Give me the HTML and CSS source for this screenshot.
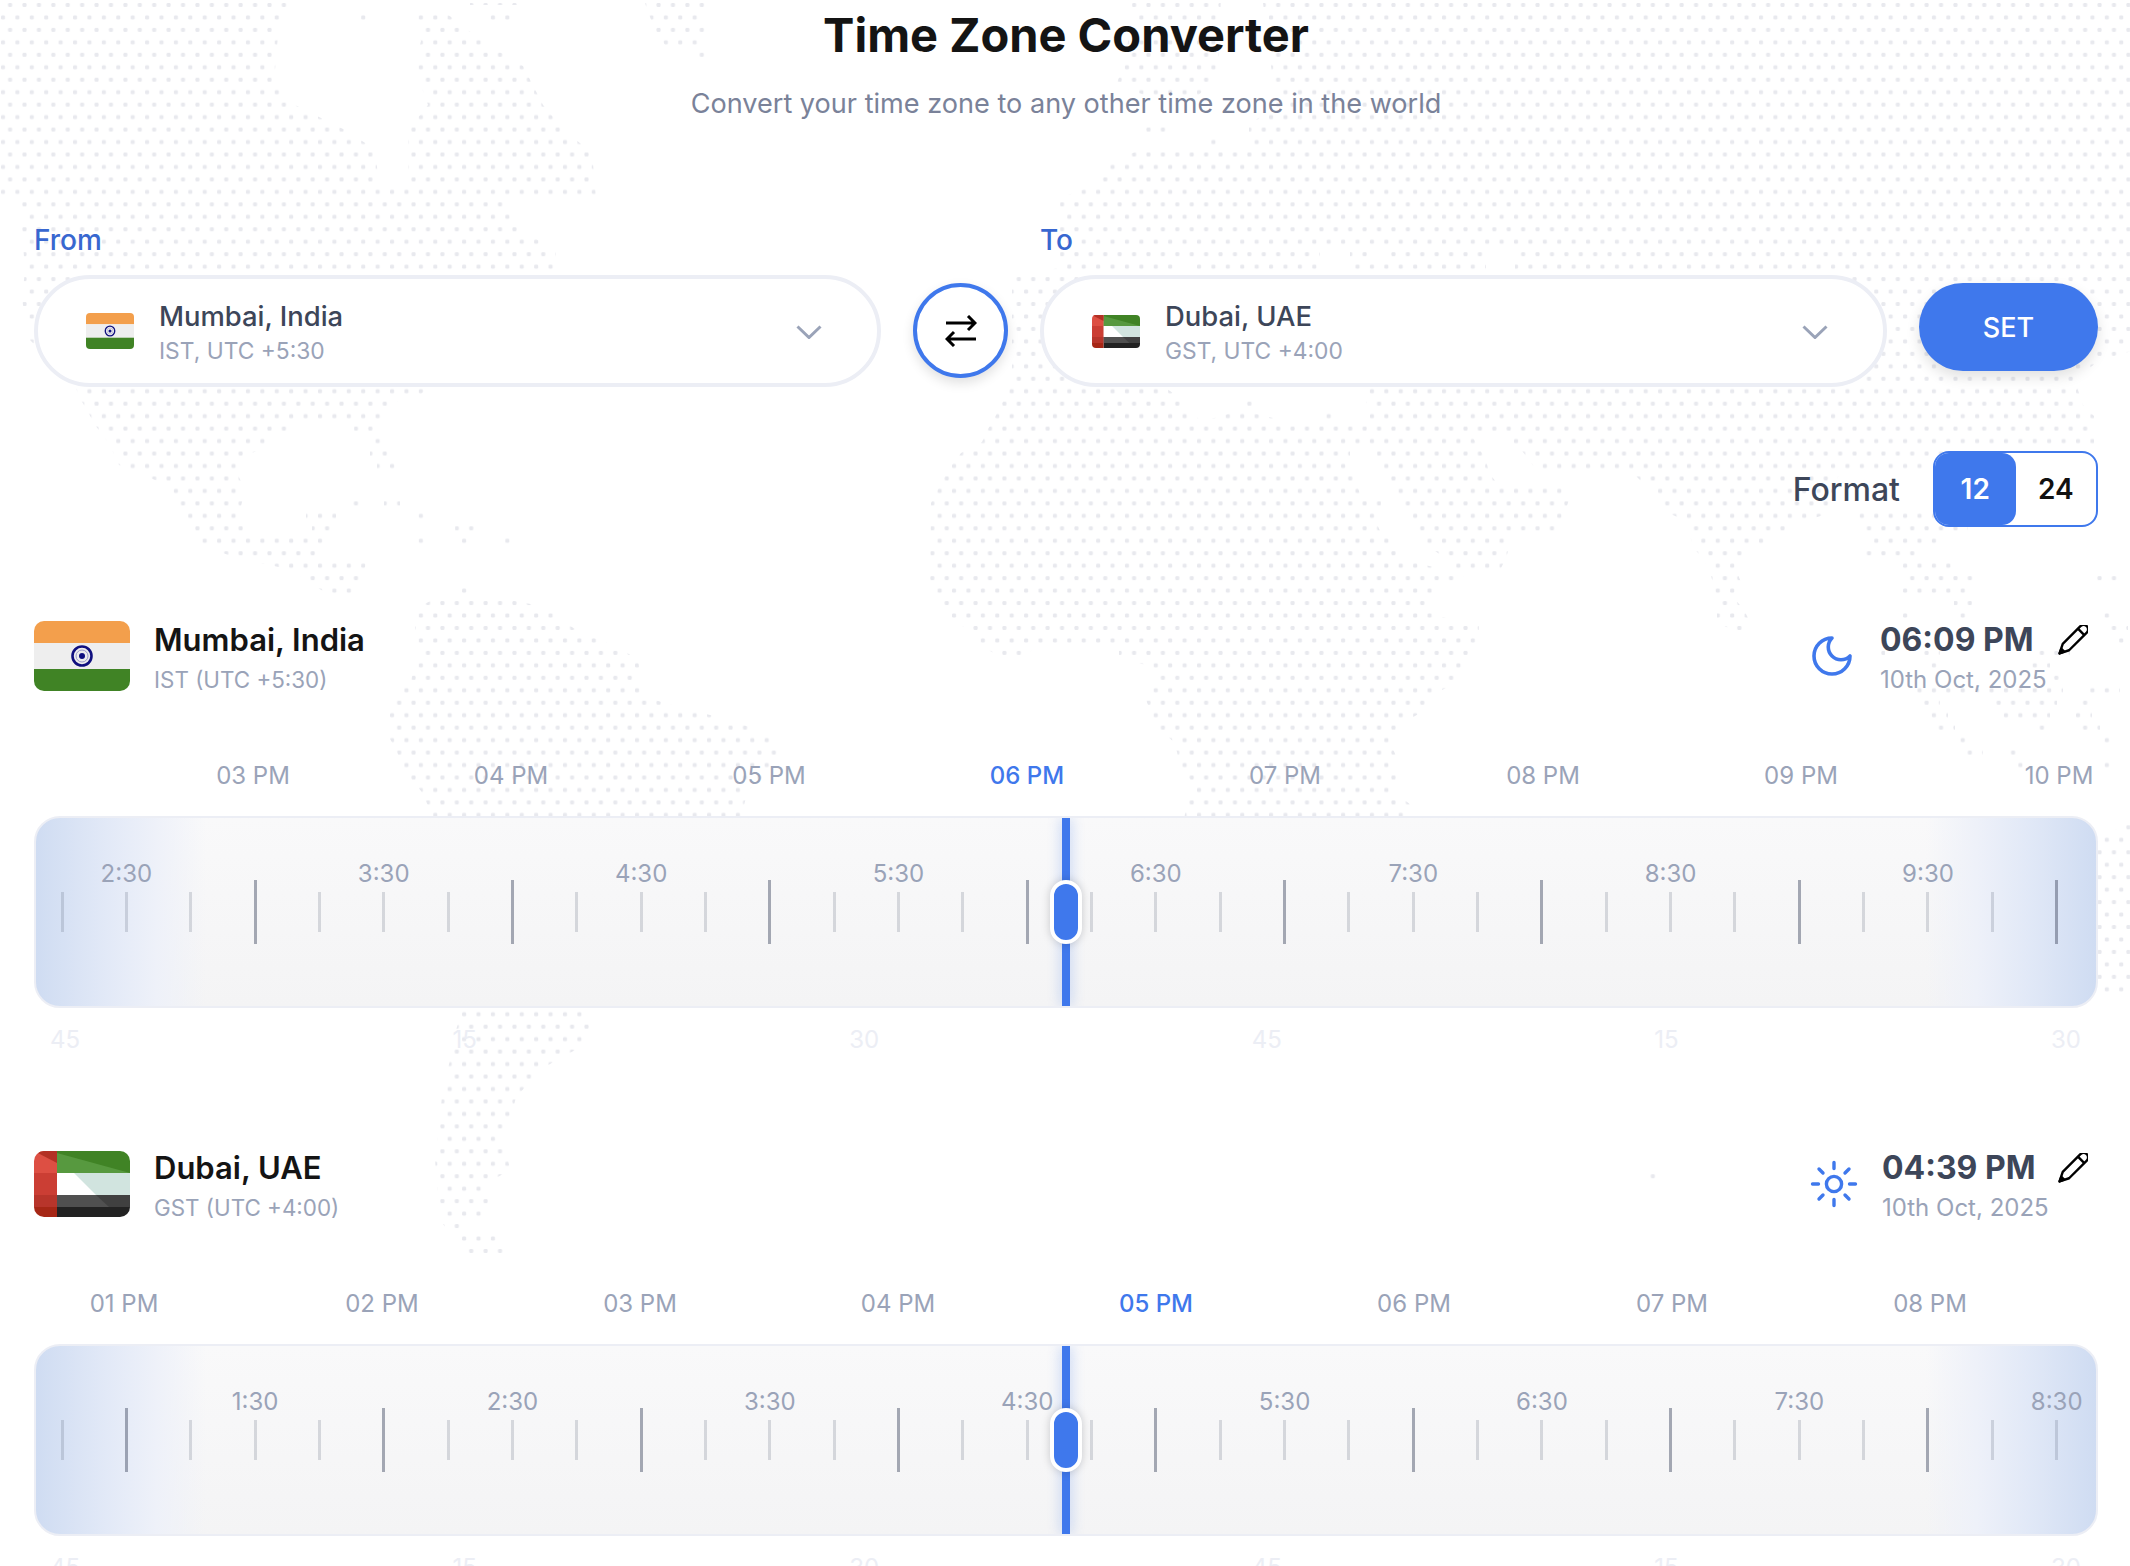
FILE: index.html
```html
<!DOCTYPE html>
<html lang="en">
<head>
<meta charset="utf-8">
<title>Time Zone Converter</title>
<link rel="stylesheet" href="styles.css">
</head>
<body>
<svg width="0" height="0" class="defs">
  <symbol id="flag-in" viewBox="0 0 96 70" preserveAspectRatio="none">
    <rect width="96" height="22" fill="#f39f4c"/>
    <rect y="22" width="96" height="26" fill="#eeeeee"/>
    <rect y="48" width="96" height="22" fill="#408325"/>
    <circle cx="48" cy="35" r="9.5" fill="none" stroke="#10107f" stroke-width="2.6"/>
    <circle cx="48" cy="35" r="3" fill="#10107f"/>
    <circle cx="48" cy="35" r="6" fill="none" stroke="#9a9ac8" stroke-width="1"/>
  </symbol>
  <symbol id="flag-ae" viewBox="0 0 96 66" preserveAspectRatio="none">
    <rect x="23" width="73" height="22" fill="#408325"/>
    <path d="M23 2L96 22H23Z" fill="#57993f"/>
    <rect x="23" y="22" width="73" height="22" fill="#d1e4df"/>
    <path d="M23 22H40L62 44H23Z" fill="#fff"/>
    <rect x="23" y="44" width="73" height="12" fill="#404040"/>
    <path d="M23 44H62L75 56H23Z" fill="#505050"/>
    <rect x="23" y="56" width="73" height="10" fill="#222"/>
    <rect width="23" height="22" fill="#dd4f43"/>
    <path d="M0 0H23V12Z" fill="#b33024"/>
    <rect y="22" width="23" height="22" fill="#cb3e34"/>
    <rect y="44" width="23" height="12" fill="#b8352b"/>
    <rect y="56" width="23" height="10" fill="#a62716"/>
  </symbol>
  <symbol id="chev" viewBox="0 0 26 14"><path d="M1.5 1.5L13 12.5L24.5 1.5" fill="none" stroke="#9aa3b8" stroke-width="3"/></symbol>
  <symbol id="pencil" viewBox="0 0 30 30">
    <g transform="translate(15 15) rotate(45)" fill="none" stroke="#000" stroke-width="2.4" stroke-linejoin="round">
      <path d="M-4.5 -15a4.5 4.5 0 0 1 9 0V10L0 19L-4.5 10Z" fill="#fff"/>
      <path d="M-4.5 -11.5H4.5"/>
      <path d="M-2 14.5L0 19L2 14.5Z" fill="#000"/>
    </g>
  </symbol>
</svg>

<div class="page">
  <svg class="map" width="2130" height="1566" viewBox="0 0 2130 1566" aria-hidden="true">
    <defs>
      <pattern id="dots" patternUnits="userSpaceOnUse" width="14.41" height="24.92">
        <rect x="8.1" y="3" width="4" height="4" rx="1.2" fill="#e8e9ee"/>
        <rect x="1" y="15.46" width="4" height="4" rx="1.2" fill="#e8e9ee"/>
      </pattern>
    </defs>
    <path fill="url(#dots)" fill-rule="evenodd" d="
      M0 -5H305L280 12L275 70L285 100L305 110L345 130L376 150L378 183H408V130L428 105L414 66L421 41L411 10H442L482 41L523 66L543 105L564 130L592 153L596 197H505L520 230L556 250V272L420 395H408L387 408L380 422H300L265 445L245 458L238 475L245 490L240 510L245 535H323V547L316 560H367L360 585L354 597H333L313 585L292 570L238 558L204 547L184 520L173 495L160 482L119 465L112 450L105 438L95 425L88 412L81 400L75 386L30 340L22 300L25 270L20 205L0 197Z
      M354 423h20v12h-20z M372 436h12v12h-12z M370 448h18v12h-18z M377 461h18v12h-18z M352 499h10v12h-10z M384 499h16v12h-16z M306 510h30v12h-30z M416 510h10v12h-10z M312 522h21v12h-21z M455 522h20v12h-20z M416 535h10v12h-10z M460 535h10v12h-10z M500 535h10v12h-10z M460 586h10v12h-10z
      M360 10h10v12h-10z M470 -5h48v10h-48z M490 10h20v12h-20z
      M642 -5H707L703 20L707 32L700 45H665L655 30L650 17Z M698 48h10v12h-10z
      M1133 -5H1221L1218 70L1210 85L1195 98H1153L1116 85L1126 60Z
      M1146 124h21v12h-21z M1208 137h10v12h-10z
      M441 596H489L557 609L563 622L584 634L618 647L638 660L642 685L648 698L682 708L734 721L767 734L780 746L776 770L748 790L740 820H435L421 791L404 770L397 752L388 735L390 700L411 680L417 660L414 609Z
      M463 1009H585L594 1027L585 1045L560 1058L540 1070L530 1082L516 1097L510 1121L503 1135L510 1170L489 1182V1222H462V1234H496V1246L520 1258H470L455 1240L440 1220L435 1160L440 1120L442 1095L450 1060L456 1030Z
      M1262 -5H2135V350L2100 360L2080 375L2078 390L2083 405L2094 416V445L2083 460L1927 462V475H1839L1832 490L1839 510L1805 521L1778 534L1757 547L1737 559V572L1742 585L1734 598L1744 610L1750 622L1744 634H1740L1717 622V598L1710 572L1703 559L1693 547L1686 521L1662 510L1657 497L1635 475H1540L1520 448L1500 436H1472L1486 460L1489 473L1500 487H1562L1569 500L1562 520L1554 535H1513L1506 558L1499 572H1452L1445 558L1428 546L1418 533L1411 520L1404 510L1398 497L1391 485L1384 472L1377 458V450H1350V470L1357 485L1361 497H1381V510L1375 520L1381 533L1398 546L1404 558L1425 565L1466 575L1432 590V615L1479 625V645L1466 660L1459 672L1452 685L1432 695L1425 710L1405 722L1398 735L1391 745L1398 760V795L1411 805L1404 820H1184L1187 802L1194 785L1180 765L1177 752L1174 742L1160 730L1153 717L1146 700L1153 680L1150 666L1119 658V645H1039L1022 658H1001L981 645L971 632L951 618L944 605L937 595L930 580L931 503L937 491L944 478L951 466L961 453L982 442L988 429L995 417L1002 403L1009 391L1012 380V275L1060 268V198L1095 185L1099 172L1113 160L1146 148H1249V125L1276 105Z
      M1160 384H1370L1364 397L1370 410V422H1289L1241 410L1201 422L1180 398Z
      M1242 398h12v12h-12z M1324 410h12v12h-12z
      M1320 247h30v24h-30z M1367 247h24v12h-24z M1486 247h29v24h-29z M1174 259h23v12h-23z
      M1859 509h81v12h-81z M1866 522h102v12h-102z M1866 535h74v12h-74z M1866 547h49v12h-49z M1903 560h51v12h-51z M1903 573h77v12h-77z M1903 586h72v12h-72z M1954 598h18v12h-18z
      M2097 573h27v12h-27z M1898 611h10v12h-10z M1956 611h10v12h-10z M2100 611h10v12h-10z M2108 623h20v12h-20z M2115 636h10v12h-10z
      M1875 648h10v12h-10z M1922 648h18v12h-18z M2037 648h33v12h-33z M1928 661h10v12h-10z M2030 661h20v12h-20z M2050 673h10v12h-10z
      M1912 686h151v12h-151z M2087 686h33v12h-33z M1922 698h18v12h-18z M1992 698h65v12h-65z M2080 698h10v12h-10z M1928 711h20v12h-20z M2000 711h50v12h-50z M2072 711h20v12h-20z M1935 723h20v12h-20z M2037 723h10v12h-10z M2080 723h20v12h-20z M1957 736h10v12h-10z M2100 736h10v12h-10z M1965 748h18v12h-18z M2007 748h10v12h-10z M2015 760h10v12h-10z M2100 760h10v12h-10z
      M2127 822H2135V995H2100L2098 990V840L2115 830Z M1647 1171h10v12h-10z"/>
  </svg>

  <header class="head">
    <h1 class="title">Time Zone Converter</h1>
    <p class="subtitle">Convert your time zone to any other time zone in the world</p>
  </header>

  <section class="controls">
    <div class="field">
      <label class="field-label">From</label>
      <div class="select">
        <svg class="flag-sm flag-sm-in"><use href="#flag-in"/></svg>
        <div class="select-text"><div class="select-name">Mumbai, India</div><div class="select-sub">IST, UTC +5:30</div></div>
        <svg class="chev"><use href="#chev"/></svg>
      </div>
    </div>
    <button class="swap" aria-label="Swap">
      <svg width="32" height="32" viewBox="0 0 32 32" fill="none" stroke="#000" stroke-width="3"><path d="M1 8H30M23 1L30 8L23 15"/><path d="M31 24H2M9 17L2 24L9 31"/></svg>
    </button>
    <div class="field">
      <label class="field-label">To</label>
      <div class="select">
        <svg class="flag-sm flag-sm-ae"><use href="#flag-ae"/></svg>
        <div class="select-text"><div class="select-name">Dubai, UAE</div><div class="select-sub">GST, UTC +4:00</div></div>
        <svg class="chev"><use href="#chev"/></svg>
      </div>
    </div>
    <button class="set">SET</button>
  </section>

  <section class="format">
    <span class="format-label">Format</span>
    <div class="toggle"><span class="seg seg-on">12</span><span class="seg">24</span></div>
  </section>

  <section class="zone">
    <div class="zone-head">
      <svg class="flag flag-in"><use href="#flag-in"/></svg>
      <div class="zone-info"><div class="zone-name">Mumbai, India</div><div class="zone-sub">IST (UTC +5:30)</div></div>
      <svg class="phase" width="48" height="48" viewBox="0 0 24 24" fill="none" stroke="#3f78ec" stroke-width="1.8" stroke-linejoin="round"><path d="M12 3a6 6 0 0 0 9 9 9 9 0 1 1-9-9Z"/></svg>
      <div class="zone-time"><div class="time">06:09 PM</div><div class="date">10th Oct, 2025</div></div>
      <svg class="pencil"><use href="#pencil"/></svg>
    </div>
    <div class="hours hours-a">
      <span>03 PM</span><span>04 PM</span><span>05 PM</span><span class="now">06 PM</span><span>07 PM</span><span>08 PM</span><span>09 PM</span><span>10 PM</span>
    </div>
    <div class="track">
      <span class="tick"></span><span class="tick"><em>2:30</em></span><span class="tick"></span><span class="tick major"></span>
      <span class="tick"></span><span class="tick"><em>3:30</em></span><span class="tick"></span><span class="tick major"></span>
      <span class="tick"></span><span class="tick"><em>4:30</em></span><span class="tick"></span><span class="tick major"></span>
      <span class="tick"></span><span class="tick"><em>5:30</em></span><span class="tick"></span><span class="tick major"></span>
      <span class="tick"></span><span class="tick"><em>6:30</em></span><span class="tick"></span><span class="tick major"></span>
      <span class="tick"></span><span class="tick"><em>7:30</em></span><span class="tick"></span><span class="tick major"></span>
      <span class="tick"></span><span class="tick"><em>8:30</em></span><span class="tick"></span><span class="tick major"></span>
      <span class="tick"></span><span class="tick"><em>9:30</em></span><span class="tick"></span><span class="tick major"></span>
      <div class="head-line"></div><div class="handle"></div>
    </div>
    <div class="minutes"><span>45</span><span>15</span><span>30</span><span>45</span><span>15</span><span>30</span></div>
  </section>

  <section class="zone">
    <div class="zone-head">
      <svg class="flag flag-ae"><use href="#flag-ae"/></svg>
      <div class="zone-info"><div class="zone-name">Dubai, UAE</div><div class="zone-sub">GST (UTC +4:00)</div></div>
      <svg class="phase" width="48" height="48" viewBox="0 0 48 48" fill="none" stroke="#3f78ec" stroke-width="3.4" stroke-linecap="round"><circle cx="24" cy="24" r="7.6"/><path d="M24 2.5V8.5M24 39.5V45.5M2.5 24H8.5M39.5 24H45.5M9 9L13 13M35 35L39 39M9 39L13 35M35 13L39 9"/></svg>
      <div class="zone-time zone-time-b"><div class="time">04:39 PM</div><div class="date">10th Oct, 2025</div></div>
      <svg class="pencil"><use href="#pencil"/></svg>
    </div>
    <div class="hours hours-b">
      <span>01 PM</span><span>02 PM</span><span>03 PM</span><span>04 PM</span><span class="now">05 PM</span><span>06 PM</span><span>07 PM</span><span>08 PM</span>
    </div>
    <div class="track">
      <span class="tick"></span><span class="tick major"></span><span class="tick"></span><span class="tick"><em>1:30</em></span>
      <span class="tick"></span><span class="tick major"></span><span class="tick"></span><span class="tick"><em>2:30</em></span>
      <span class="tick"></span><span class="tick major"></span><span class="tick"></span><span class="tick"><em>3:30</em></span>
      <span class="tick"></span><span class="tick major"></span><span class="tick"></span><span class="tick"><em>4:30</em></span>
      <span class="tick"></span><span class="tick major"></span><span class="tick"></span><span class="tick"><em>5:30</em></span>
      <span class="tick"></span><span class="tick major"></span><span class="tick"></span><span class="tick"><em>6:30</em></span>
      <span class="tick"></span><span class="tick major"></span><span class="tick"></span><span class="tick"><em>7:30</em></span>
      <span class="tick"></span><span class="tick major"></span><span class="tick"></span><span class="tick"><em>8:30</em></span>
      <div class="head-line"></div><div class="handle"></div>
    </div>
    <div class="minutes"><span>45</span><span>15</span><span>30</span><span>45</span><span>15</span><span>30</span></div>
  </section>
</div>
</body>
</html>
```
FILE: styles.css
```css
* { box-sizing: border-box; }
html, body { margin: 0; padding: 0; background: #fff; }
body { font-family: Inter, "Liberation Sans", sans-serif; color: #111; }
.defs { position: absolute; }
.page { position: relative; width: 2130px; height: 1566px; overflow: hidden; padding: 3px 32px 0 34px; }
.map { position: absolute; left: 0; top: 0; z-index: 0; }
.head, .controls, .format, .zone { position: relative; z-index: 1; }

.head { text-align: center; }
.title { margin: 0; font-size: 47px; line-height: 64px; font-weight: 700; color: #141414; }
.subtitle { margin: 20px 0 0; font-size: 27.1px; line-height: 34px; font-weight: 400; color: #7a8299; }

.controls { display: flex; align-items: flex-start; gap: 32px; margin-top: 101px; }
.field { flex: 1; display: flex; flex-direction: column; }
.field-label { font-size: 28px; line-height: 36px; font-weight: 500; color: #3867d0; height: 36px; margin-bottom: 17px; }
.select { height: 112px; border: 4px solid #eceef5; border-radius: 56px; background: #fff; display: flex; align-items: center; padding-left: 48px; padding-right: 55px; }
.flag-sm { width: 48px; flex: none; border-radius: 4px; }
.flag-sm-in { height: 36px; }
.flag-sm-ae { height: 33px; }
.select-text { flex: 1; margin-left: 25px; margin-top: 4px; }
.select-name { font-size: 27.4px; line-height: 36px; font-weight: 500; color: #3d4659; }
.select-sub { font-size: 22.8px; line-height: 34px; font-weight: 400; color: #9aa3b8; }
.chev { width: 26px; height: 14px; flex: none; margin-top: 2px; }
.swap { width: 95px; height: 95px; margin-top: 61px; flex: none; border-radius: 50%; border: 4px solid #3f78ec; background: #fff; padding: 0; display: flex; align-items: center; justify-content: center; box-shadow: 0 5px 12px rgba(0,0,0,.12); }
.set { width: 179px; height: 88px; margin-top: 61px; flex: none; border: 0; border-radius: 44px; background: #3f78ec; color: #fff; font: 500 27px Inter, sans-serif; box-shadow: 0 6px 14px rgba(0,0,0,.12); }

.format { display: flex; justify-content: flex-end; align-items: center; gap: 33px; margin-top: 64px; }
.format-label { font-size: 32px; font-weight: 500; color: #3d4659; }
.toggle { width: 165px; height: 76px; border: 2px solid #3f78ec; border-radius: 16px; display: flex; background: #fff; overflow: hidden; }
.seg { flex: 1; display: flex; align-items: center; justify-content: center; font-size: 28px; font-weight: 600; color: #111; }
.seg-on { background: #3f78ec; color: #fff; border-radius: 0 14px 14px 0; }

.zone { margin-top: 94px; height: 435px; }
.zone + .zone { margin-top: 93px; }
.zone-head { display: flex; align-items: center; height: 70px; padding-right: 10px; }
.flag { width: 96px; flex: none; border-radius: 10px; }
.flag-in { height: 70px; }
.flag-ae { height: 66px; }
.zone-info { flex: 1; margin-left: 24px; margin-top: 5px; }
.zone-name { font-size: 31px; line-height: 40px; font-weight: 600; color: #141414; }
.zone-sub { font-size: 22.4px; line-height: 34px; color: #9aa3b8; margin-top: 3px; }
.phase { flex: none; margin-right: 24px; }
.zone-time { flex: none; width: 178px; margin-top: 5px; }
.zone-time-b { width: 176px; }
.time { font-size: 32px; line-height: 40px; font-weight: 700; color: #3d4659; }
.date { font-size: 24px; line-height: 34px; color: #9aa3b8; margin-top: 3px; }
.pencil { width: 30px; height: 30px; flex: none; margin-top: -33px; }

.hours { display: grid; grid-template-columns: repeat(8, 258px); margin-top: 70px; font-size: 24px; line-height: 30px; color: #9aa3b8; text-align: center; }
.hours-a { margin-left: 90px; }
.hours-b { margin-left: -39px; }
.hours .now { color: #3f78ec; font-weight: 500; }

.track { position: relative; margin-top: 25px; height: 192px; border: 2px solid #eceef5; border-radius: 26px; display: flex; align-items: center; padding-left: 24.5px; overflow: hidden;
  background:
    linear-gradient(90deg, #cfdcf2 0, #e2e9f7 70px, #eef1f9 120px, rgba(248,248,250,0) 170px),
    linear-gradient(270deg, #cfdcf2 0, #e2e9f7 70px, #eef1f9 120px, rgba(248,248,250,0) 170px),
    linear-gradient(180deg, #f9f9fa, #f4f4f5); }
.tick { position: relative; flex: none; width: 64.35px; height: 40px; }
.tick::before { content: ""; position: absolute; left: 0; top: 0; width: 3px; height: 40px; background: rgba(80,88,110,.2); }
.tick.major { height: 64px; }
.tick.major::before { height: 64px; background: rgba(80,88,110,.5); }
.tick em { position: absolute; left: 1.5px; top: -33px; transform: translateX(-50%); font-style: normal; font-size: 24px; line-height: 30px; color: #9aa3b8; }
.head-line { position: absolute; left: 1026px; top: 0; bottom: 0; width: 8px; background: #3f78ec; box-shadow: 0 0 14px rgba(63,120,236,.35); }
.handle { position: absolute; left: 1014px; top: 62px; width: 32px; height: 64px; border: 4px solid #fff; border-radius: 16px; background: #3f78ec; box-shadow: 0 0 10px rgba(0,0,0,.18); }

.minutes { display: flex; justify-content: space-between; padding: 0 17px 0 16px; margin-top: 17px; font-size: 24px; line-height: 30px; color: #eceef5; }
```
